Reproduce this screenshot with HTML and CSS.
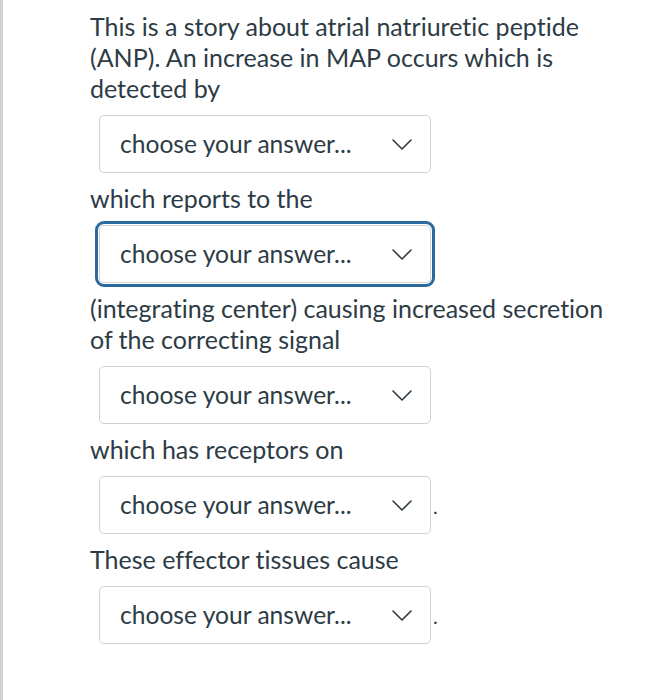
FILE: index.html
```html
<!DOCTYPE html>
<html>
<head>
<meta charset="utf-8">
<link rel="stylesheet" href="styles.css">
</head>
<body>
<div class="page">
  <div class="content">
    <p class="text">This is a story about atrial natriuretic peptide (ANP). An increase in MAP occurs which is detected by</p>
    <div class="row"><div class="select"><span>choose your answer...</span><svg class="chev" viewBox="0 0 20 11" width="20" height="11"><path d="M1 1 L10 10 L19 1" fill="none" stroke="#2d3b45" stroke-width="1.6" stroke-linecap="round" stroke-linejoin="round"/></svg></div></div>
    <p class="text">which reports to the</p>
    <div class="row"><div class="select focused"><span>choose your answer...</span><svg class="chev" viewBox="0 0 20 11" width="20" height="11"><path d="M1 1 L10 10 L19 1" fill="none" stroke="#2d3b45" stroke-width="1.6" stroke-linecap="round" stroke-linejoin="round"/></svg></div></div>
    <p class="text">(integrating center) causing increased secretion of the correcting signal</p>
    <div class="row"><div class="select"><span>choose your answer...</span><svg class="chev" viewBox="0 0 20 11" width="20" height="11"><path d="M1 1 L10 10 L19 1" fill="none" stroke="#2d3b45" stroke-width="1.6" stroke-linecap="round" stroke-linejoin="round"/></svg></div></div>
    <p class="text">which has receptors on</p>
    <div class="row"><div class="select"><span>choose your answer...</span><svg class="chev" viewBox="0 0 20 11" width="20" height="11"><path d="M1 1 L10 10 L19 1" fill="none" stroke="#2d3b45" stroke-width="1.6" stroke-linecap="round" stroke-linejoin="round"/></svg></div><span class="dot">.</span></div>
    <p class="text">These effector tissues cause</p>
    <div class="row"><div class="select"><span>choose your answer...</span><svg class="chev" viewBox="0 0 20 11" width="20" height="11"><path d="M1 1 L10 10 L19 1" fill="none" stroke="#2d3b45" stroke-width="1.6" stroke-linecap="round" stroke-linejoin="round"/></svg></div><span class="dot">.</span></div>
  </div>
</div>
</body>
</html>
```
FILE: styles.css
```css
html, body {
  margin: 0;
  padding: 0;
  background: #ffffff;
}
body {
  font-family: Lato, "Liberation Sans", sans-serif;
  color: #2d3b45;
  font-size: 25px;
  font-variant-ligatures: none;
}
.page {
  min-height: 700px;
  border-left: 3px solid #d2d2d2;
  box-sizing: border-box;
}
.content {
  padding: 11px 20px 0 87px;
  width: 530px;
}
.text {
  margin: 0;
  line-height: 31px;
}
.row {
  margin: 10.5px 0;
  display: flex;
  align-items: baseline;
}
.select {
  margin-left: 9px;
  width: 332px;
  height: 58px;
  box-sizing: border-box;
  border: 1px solid #cfd3d6;
  border-radius: 5px;
  display: flex;
  align-items: center;
  justify-content: space-between;
  padding: 0 18px 0 20px;
  background: #fff;
  font-size: 24.6px;
}
.select.focused {
  outline: 3px solid #2a6a9f;
  outline-offset: 1px;
}
.chev {
  display: block;
  margin-top: 2px;
}
.dot {
  margin-left: 2px;
  font-size: 20px;
}
```
